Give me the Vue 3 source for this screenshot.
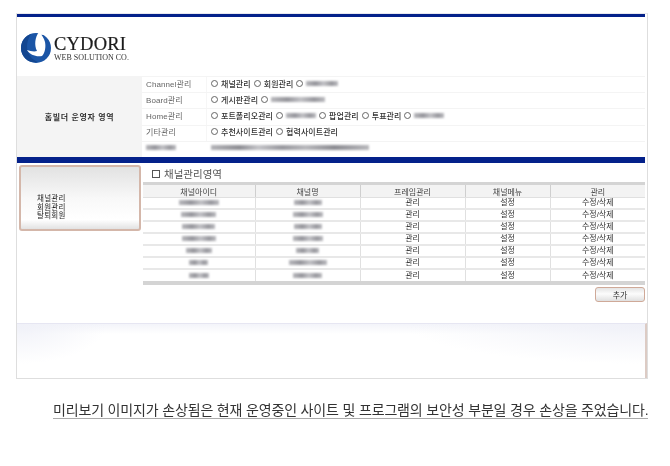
<script setup>
const menus = [
  { label: 'Channel관리', items: [{ t: '채널관리' }, { t: '회원관리' }, { w: 32 }] },
  { label: 'Board관리', items: [{ t: '게시판관리' }, { w: 54 }] },
  { label: 'Home관리', items: [{ t: '포트폴리오관리' }, { w: 30 }, { t: '팝업관리' }, { t: '투표관리' }, { w: 30 }] },
  { label: '기타관리', items: [{ t: '추천사이트관리' }, { t: '협력사이트관리' }] },
]
const columns = ['채널아이디', '채널명', '프레임관리', '채널메뉴', '관리']
const rows = [
  { id: 40, name: 28 },
  { id: 35, name: 30 },
  { id: 33, name: 28 },
  { id: 34, name: 30 },
  { id: 26, name: 23 },
  { id: 19, name: 38 },
  { id: 20, name: 29 },
]
</script>

<template>
  <div class="page">
    <div class="frame">
      <div class="bar bar-top"></div>
      <div class="logo">
        <svg width="32" height="32" viewBox="0 0 32 32">
          <circle cx="16" cy="16" r="15" fill="#1b55a6" />
          <path d="M1 16 C1 9 5 4 11 2 C7 8 6 15 8 20 C10 25 13 28 18 30 C9 32 1 25 1 16 Z" fill="#134690" />
          <path d="M19 0 C15 5 14 13 17 19 C14 20 10 19 7 18 C10 23 16 25 22 24 C25 21 26 15 25 10 C24 6 22 3 19 0 Z" fill="#fff" />
          <path d="M19 0 L26 0 L26 4 Q23 2 20 3 Z" fill="#fff" />
        </svg>
        <div class="logo-text">
          <div class="logo-name">CYDORI</div>
          <div class="logo-sub">WEB SOLUTION CO.</div>
        </div>
      </div>

      <div class="top">
        <div class="top-title">홈빌더 운영자 영역</div>
        <div class="menus">
          <div v-for="m in menus" :key="m.label" class="menu-row">
            <div class="menu-label">{{ m.label }}</div>
            <div class="menu-items">
              <span v-for="(it, i) in m.items" :key="i" class="menu-item">
                <i class="radio"></i>
                <b v-if="it.t">{{ it.t }}</b>
                <em v-else class="smudge" :style="{ width: it.w + 'px' }"></em>
              </span>
            </div>
          </div>
          <div class="menu-row menu-last">
            <div class="menu-label"><em class="smudge" style="width: 30px"></em></div>
            <div class="menu-items"><em class="smudge dark" style="width: 158px"></em></div>
          </div>
        </div>
      </div>

      <div class="bar bar-mid"></div>

      <div class="body">
        <div class="side">
          <div>채널관리</div>
          <div>회원관리</div>
          <div>탈퇴회원</div>
        </div>
        <div class="main">
          <div class="main-title"><i class="check"></i>채널관리영역</div>
          <table class="grid">
            <colgroup>
              <col style="width: 112px" />
              <col style="width: 105px" />
              <col style="width: 105px" />
              <col style="width: 85px" />
              <col />
            </colgroup>
            <thead>
              <tr><th v-for="c in columns" :key="c">{{ c }}</th></tr>
            </thead>
            <tbody>
              <tr v-for="(r, i) in rows" :key="i">
                <td><em class="smudge" :style="{ width: r.id + 'px' }"></em></td>
                <td><em class="smudge" :style="{ width: r.name + 'px' }"></em></td>
                <td>관리</td>
                <td>설정</td>
                <td>수정/삭제</td>
              </tr>
            </tbody>
          </table>
          <div class="actions"><button class="add">추가</button></div>
        </div>
      </div>

      <div class="foot"></div>
    </div>
    <p class="note"><span>미리보기 이미지가 손상됨은 현재 운영중인 사이트 및 프로그램의 보안성 부분일 경우 손상을 주었습니다.</span></p>
  </div>
</template>

<style>
html, body { background: #fff; }
</style>

<style scoped>
.page { width: 670px; height: 466px; overflow: hidden; padding-top: 13px; box-sizing: border-box; font-family: "Liberation Sans", "Noto Sans CJK KR", sans-serif; color: #333; }
.frame { margin-left: 16px; width: 632px; height: 366px; box-sizing: border-box; border: 1px solid #dedede; border-top-color: #e8e8ee; background: #fff; display: flex; flex-direction: column; filter: blur(0.35px); }
.bar { background: #04218a; margin-right: 2px; flex: none; }
.bar-top { height: 3px; }
.bar-mid { height: 6px; }
.logo { height: 59px; flex: none; display: flex; align-items: flex-start; gap: 2px; padding: 15px 0 0 3px; box-sizing: border-box; }
.logo-text { padding-top: 5px; }
.logo-name { font-family: "Liberation Serif", serif; font-size: 18.5px; line-height: 15px; color: #1c1c1c; letter-spacing: 0.2px; -webkit-text-stroke: 0.2px #1c1c1c; }
.logo-sub { font-family: "Liberation Serif", serif; font-size: 8px; line-height: 9px; color: #333; margin-top: 1px; }
.top { height: 81px; flex: none; display: flex; margin-right: 2px; }
.top-title { width: 125px; flex: none; background: #f4f4f4; display: flex; align-items: center; justify-content: center; font-size: 8px; font-weight: 700; letter-spacing: 0.6px; color: #333; }
.menus { flex: 1; display: flex; flex-direction: column; }
.menu-row { flex: 1; display: flex; align-items: stretch; border-top: 1px solid #f4f4f4; font-size: 8px; }
.menu-label { width: 65px; flex: none; box-sizing: border-box; padding: 0 0 3px 4px; color: #666; display: flex; align-items: center; border-right: 1px solid #f6f6f6; font-size: 8px; letter-spacing: 0.1px; }
.menu-items { display: flex; align-items: center; gap: 3px; padding: 0 0 3px 4px; color: #333; }
.menu-item { display: inline-flex; align-items: center; gap: 3px; }
.menu-item b { font-weight: 500; letter-spacing: 0.07px; }
.menu-last .menu-label { border-right: 0; }
.radio { width: 5px; height: 5px; border: 1px solid #666; border-radius: 50%; display: inline-block; }
.smudge { display: inline-block; height: 5px; background: linear-gradient(90deg, #b8b8bc, #96969c 30%, #c2c2c6 55%, #98989e 80%, #bcbcc0); filter: blur(1.2px); }
.smudge.dark { background: linear-gradient(90deg, #b4b4b8, #8e8e94 18%, #c4c4c8 30%, #98989e 45%, #b8b8bc 60%, #8c8c92 78%, #b8b8bc); }
.body { height: 160px; flex: none; display: flex; margin-right: 2px; }
.side { width: 122px; height: 66px; flex: none; box-sizing: border-box; margin: 2px 0 0 2px; border: 2px solid #d4b7aa; border-radius: 3px; background: linear-gradient(#e2e2e2, #f8f8f8 50%, #fff 85%, #e2e2e2); padding: 28px 0 0 16px; font-size: 7.5px; line-height: 8.5px; letter-spacing: 0.25px; color: #222; }
.main { width: 502px; margin-left: 2px; }
.main-title { height: 17px; margin-top: 2px; padding-left: 9px; display: flex; align-items: center; gap: 4px; font-size: 10.5px; color: #555; }
.check { width: 6px; height: 6px; border: 1px solid #555; display: inline-block; }
.grid { width: 100%; table-layout: fixed; border-collapse: collapse; border-top: 3px solid #d4d4d4; border-bottom: 4px solid #d4d4d4; font-size: 8px; text-align: center; color: #333; }
.grid th { height: 12px; padding: 0; background: #f3f3f3; font-weight: 400; color: #444; border-right: 1px solid #cfcfcf; border-bottom: 1px solid #e0e0e0; }
.grid td { height: 10px; padding: 0; border-right: 1px solid #e0e0e0; border-bottom: 2px solid #e8e8e8; line-height: 10px; }
.grid th:last-child, .grid td:last-child { border-right: 0; }
.grid tr:last-child td { border-bottom: 0; height: 11px; }
.grid .smudge { vertical-align: middle; }
.actions { display: flex; justify-content: flex-end; margin-top: 2px; }
.add { width: 50px; height: 15px; padding: 0; border: 1px solid #cfa998; border-radius: 3px; background: linear-gradient(#e4e4e4, #fcfcfc 45%, #e0e0e0); font: 8px "Noto Sans CJK KR", sans-serif; color: #333; }
.foot { flex: 1; border-top: 1px solid #e6e6f2; border-right: 2px solid #dccbc4; background: radial-gradient(90px 40px at 0 0, #f0f1f8, transparent), radial-gradient(240px 40px at 100% 0, #f0f1f8, transparent), linear-gradient(#f3f4fa, #fff 10px); }
.note { margin: 24px 0 0 53px; font-size: 14px; line-height: 15px; color: #333; white-space: nowrap; letter-spacing: -0.16px; filter: blur(0.25px); }
.note span { display: inline-block; border-bottom: 1px solid #aaa; }
</style>
